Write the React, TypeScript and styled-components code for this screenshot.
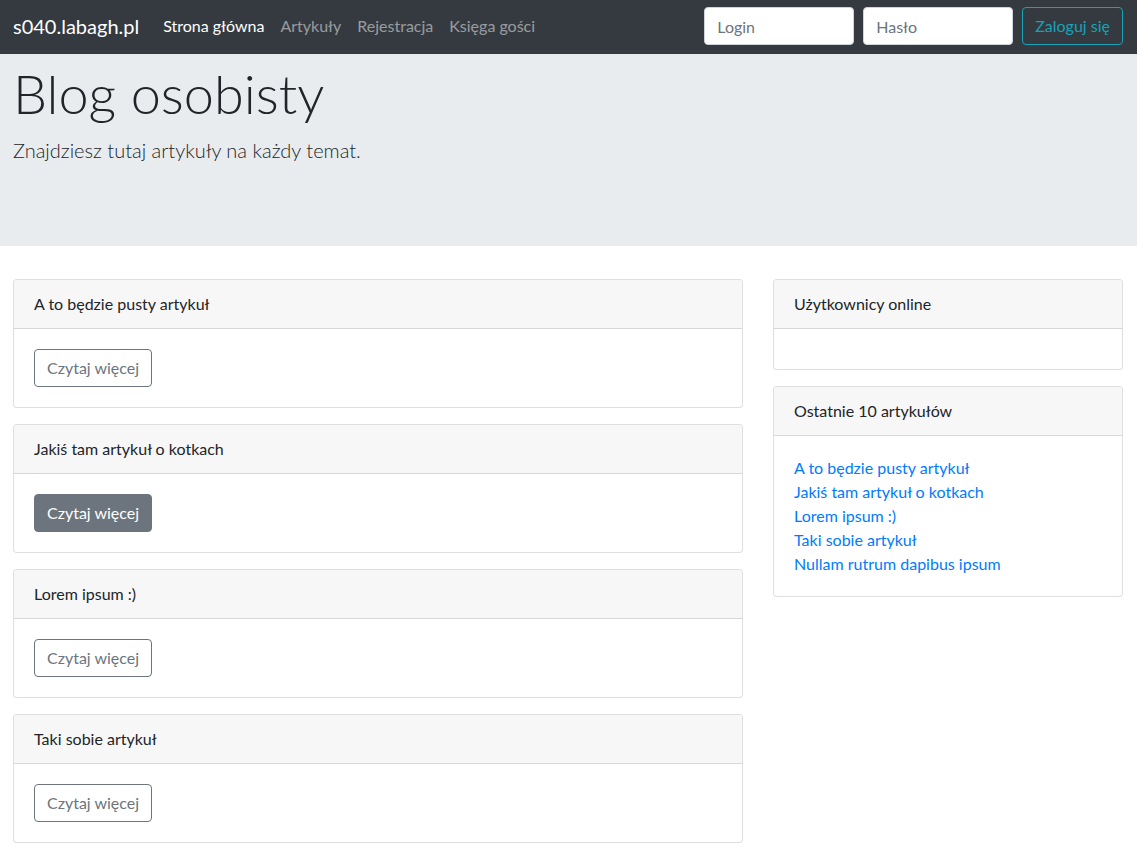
import styled, { createGlobalStyle } from 'styled-components';

const GlobalStyle = createGlobalStyle`
  * { box-sizing: border-box; }
  body {
    margin: 0;
    font-family: Lato, "Noto Sans", sans-serif;
    font-size: 16px;
    line-height: 1.5;
    color: #212529;
    background: #fff;
  }
`;

const Navbar = styled.nav`
  display: flex;
  align-items: center;
  height: 54px;
  padding: 0 14px 2px 13px;
  background: #343a40;
`;

const Brand = styled.a`
  font-size: 20px;
  color: #fff;
  margin-right: 16px;
  text-decoration: none;
`;

const NavList = styled.ul`
  display: flex;
  list-style: none;
  margin: 0;
  padding: 0;
  flex: 1;
`;

const NavLink = styled.a<{ $active?: boolean }>`
  display: block;
  padding: 8px;
  color: ${({ $active }) => ($active ? '#fff' : 'rgba(255, 255, 255, 0.5)')};
  text-decoration: none;
`;

const LoginForm = styled.form`
  display: flex;
  gap: 9px;
`;

const Input = styled.input`
  width: 150px;
  height: 38px;
  padding: 6px 12px;
  font: inherit;
  color: #495057;
  border: 1px solid #ced4da;
  border-radius: 4px;
  background: #fff;
  &::placeholder { color: #6c757d; }
`;

const OutlineButton = styled.button`
  height: 38px;
  padding: 6px 12px;
  font: inherit;
  white-space: nowrap;
  color: #17a2b8;
  background: transparent;
  border: 1px solid #17a2b8;
  border-radius: 4px;
`;

const Jumbotron = styled.header`
  height: 192px;
  padding: 8px 13px 0;
  background: #e9ecef;
`;

const Title = styled.h1`
  margin: 0 0 8px;
  font-size: 54px;
  font-weight: 300;
  line-height: 1.2;
`;

const Lead = styled.p`
  margin: 0;
  font-size: 20px;
  font-weight: 300;
`;

const Main = styled.main`
  display: grid;
  grid-template-columns: 730px 350px;
  column-gap: 30px;
  padding: 33px 14px 0 13px;
`;

const Column = styled.div`
  display: flex;
  flex-direction: column;
  gap: 16px;
`;

const Card = styled.section`
  border: 1px solid rgba(0, 0, 0, 0.125);
  border-radius: 4px;
  background: #fff;
  overflow: hidden;
`;

const CardHeader = styled.div`
  padding: 12px 20px;
  background: #f7f7f7;
  border-bottom: 1px solid rgba(0, 0, 0, 0.125);
`;

const CardBody = styled.div`
  padding: 20px;
  min-height: 40px;
`;

const ReadMore = styled.button<{ $hover?: boolean }>`
  height: 38px;
  padding: 6px 12px;
  font: inherit;
  white-space: nowrap;
  color: ${({ $hover }) => ($hover ? '#fff' : '#6c757d')};
  background: ${({ $hover }) => ($hover ? '#6c757d' : 'transparent')};
  border: 1px solid #6c757d;
  border-radius: 4px;
`;

const LinkList = styled.div`
  display: flex;
  flex-direction: column;
`;

const ArticleLink = styled.a`
  color: #007bff;
  text-decoration: none;
`;

const articles = [
  'A to będzie pusty artykuł',
  'Jakiś tam artykuł o kotkach',
  'Lorem ipsum :)',
  'Taki sobie artykuł',
];

const recent = [...articles, 'Nullam rutrum dapibus ipsum'];

export default function App() {
  return (
    <>
      <GlobalStyle />
      <Navbar>
        <Brand href="#">s040.labagh.pl</Brand>
        <NavList>
          <li><NavLink href="#" $active>Strona główna</NavLink></li>
          <li><NavLink href="#">Artykuły</NavLink></li>
          <li><NavLink href="#">Rejestracja</NavLink></li>
          <li><NavLink href="#">Księga gości</NavLink></li>
        </NavList>
        <LoginForm onSubmit={(e) => e.preventDefault()}>
          <Input placeholder="Login" />
          <Input type="password" placeholder="Hasło" />
          <OutlineButton type="submit">Zaloguj się</OutlineButton>
        </LoginForm>
      </Navbar>
      <Jumbotron>
        <Title>Blog osobisty</Title>
        <Lead>Znajdziesz tutaj artykuły na każdy temat.</Lead>
      </Jumbotron>
      <Main>
        <Column>
          {articles.map((title, i) => (
            <Card key={title}>
              <CardHeader>{title}</CardHeader>
              <CardBody>
                <ReadMore type="button" $hover={i === 1}>Czytaj więcej</ReadMore>
              </CardBody>
            </Card>
          ))}
        </Column>
        <Column>
          <Card>
            <CardHeader>Użytkownicy online</CardHeader>
            <CardBody />
          </Card>
          <Card>
            <CardHeader>Ostatnie 10 artykułów</CardHeader>
            <CardBody>
              <LinkList>
                {recent.map((title) => (
                  <ArticleLink key={title} href="#">{title}</ArticleLink>
                ))}
              </LinkList>
            </CardBody>
          </Card>
        </Column>
      </Main>
    </>
  );
}
